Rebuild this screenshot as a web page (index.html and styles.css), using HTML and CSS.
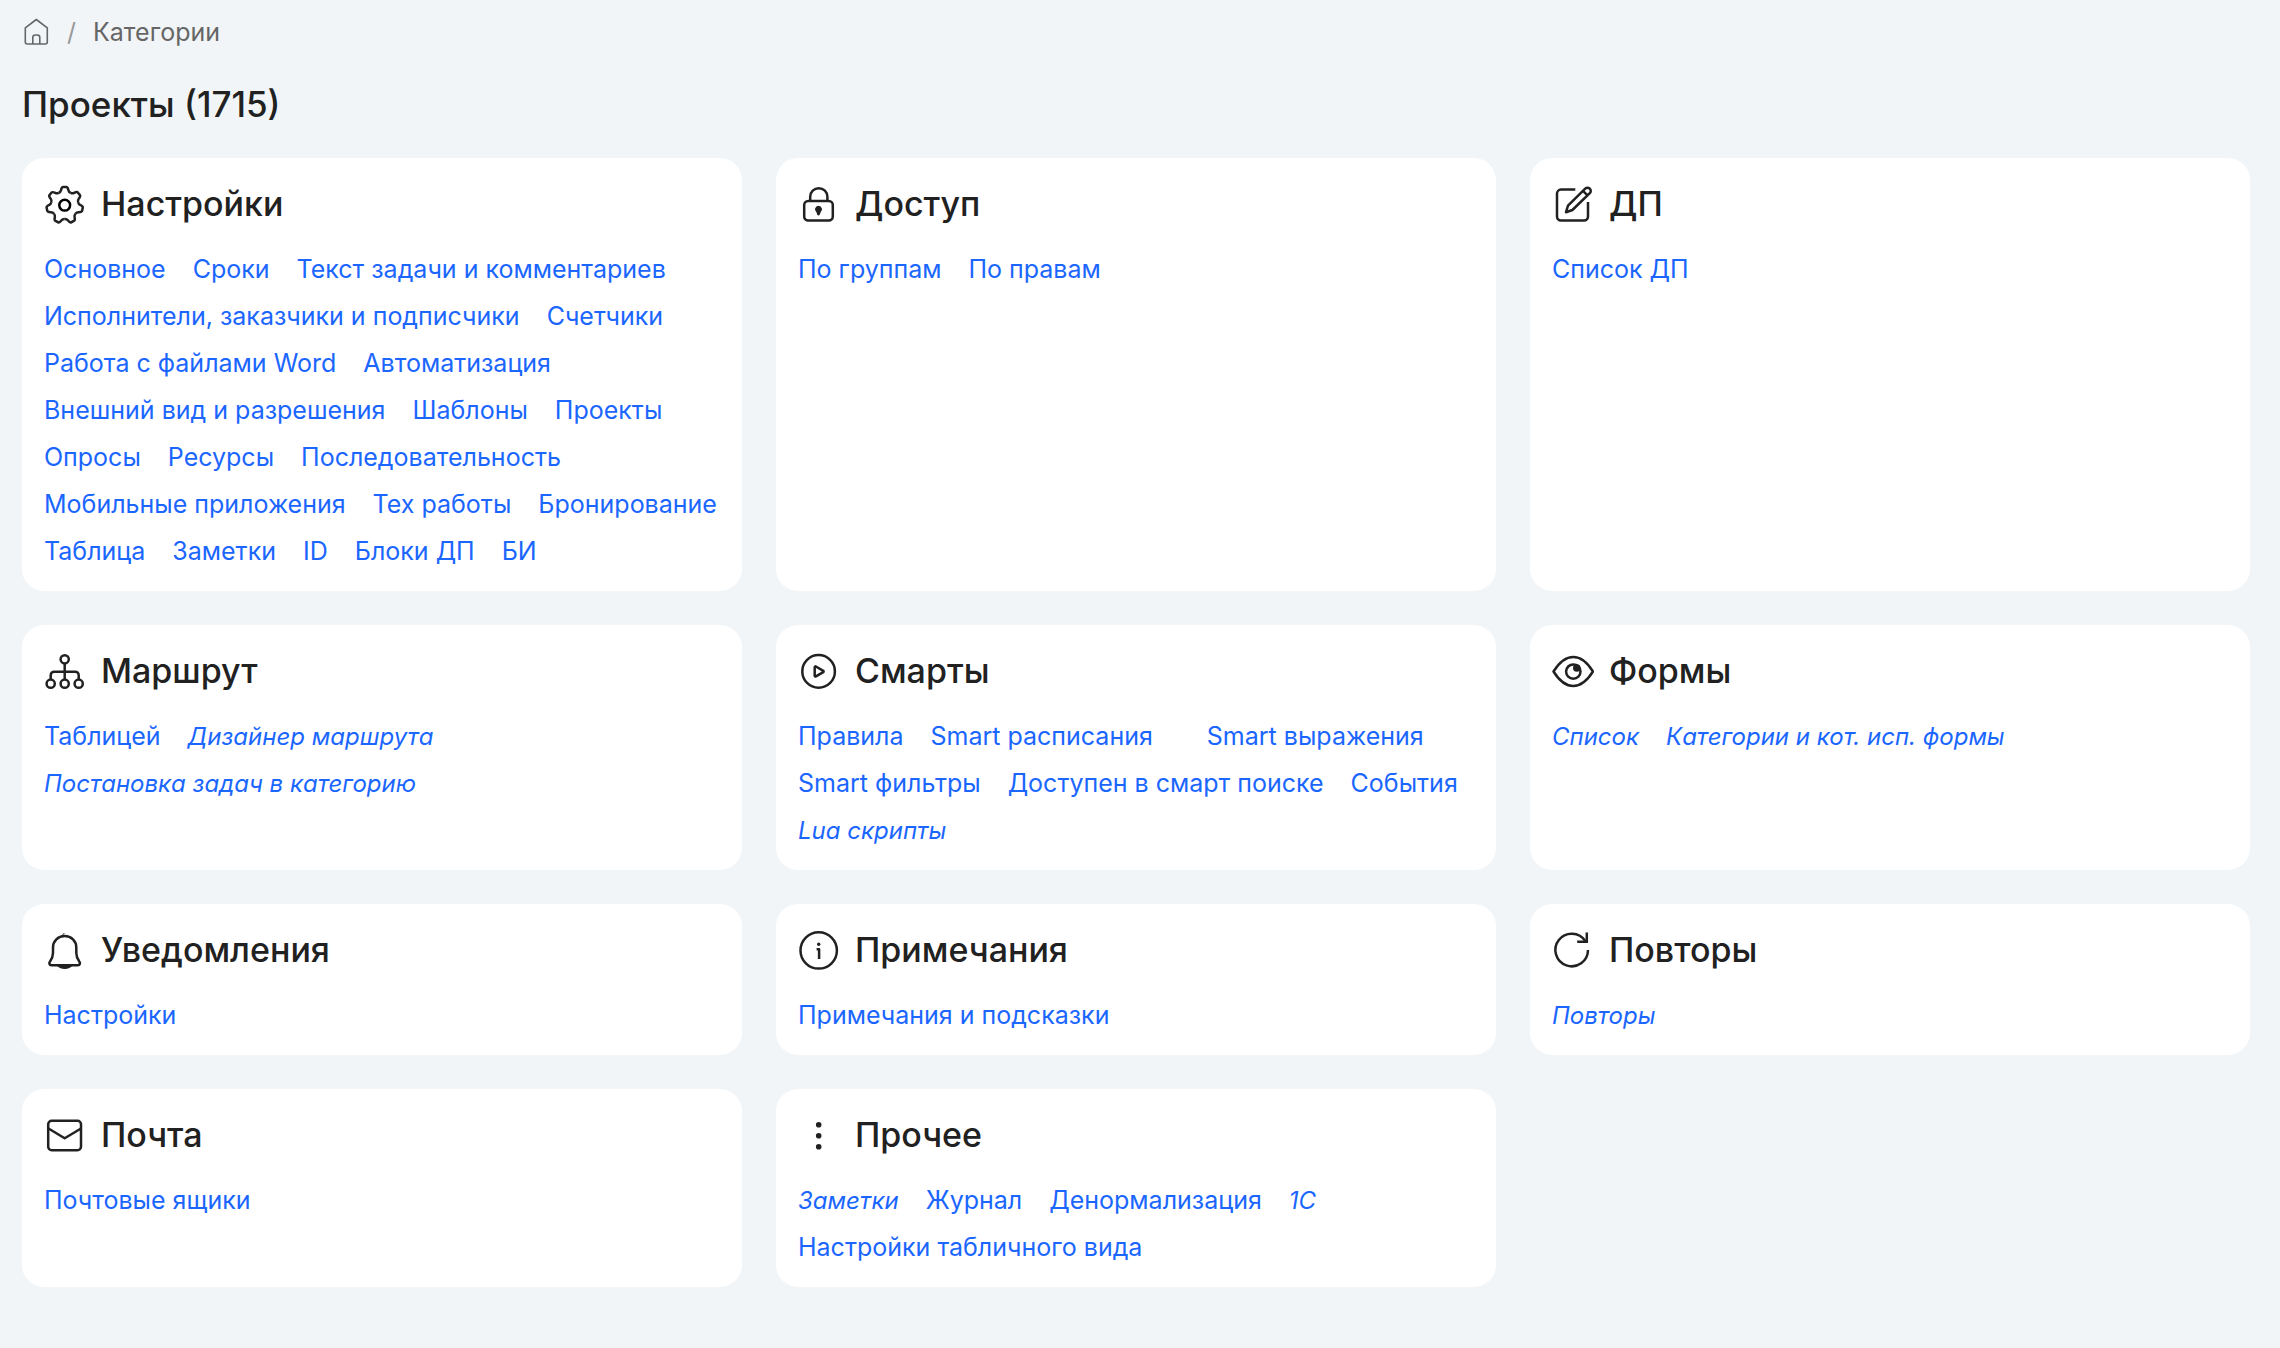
FILE: index.html
```html
<!DOCTYPE html>
<html lang="ru">
<head>
<meta charset="utf-8">
<meta name="viewport" content="width=device-width, initial-scale=1">
<title>Категории</title>
<link rel="stylesheet" href="styles.css">
</head>
<body>
<nav class="breadcrumb" aria-label="Навигация">
  <a class="home" href="#" aria-label="Главная"><svg viewBox="0 0 26 28" aria-hidden="true"><path d="M12.3 1.5 23.3 9.8V24a2 2 0 0 1-2 2h-18a2 2 0 0 1-2-2V9.8zM8.8 26v-6.500a2.500 2.500 0 0 1 2.500-2.500h2a2.500 2.500 0 0 1 2.500 2.500V26"/></svg></a>
  <span class="slash">/</span>
  <a class="crumb" href="#">Категории</a>
</nav>
<main>
  <h1 class="page-title">Проекты (1715)</h1>
  <div class="cards">
    <section class="card">
      <h2 class="card-title"><svg class="icon" viewBox="0 0 42 42" aria-hidden="true"><defs><path id="tooth" d="M-6-12.4C-4.6-13-4-13.6-3.7-15-3.3-17-2.9-18.2-1.5-18.2H1.5C2.9-18.2 3.3-17 3.7-15 4-13.6 4.6-13 6-12.4"/></defs><g transform="translate(20.7 22.2)"><use href="#tooth"/><use href="#tooth" transform="rotate(51.43)"/><use href="#tooth" transform="rotate(102.86)"/><use href="#tooth" transform="rotate(154.29)"/><use href="#tooth" transform="rotate(205.71)"/><use href="#tooth" transform="rotate(257.14)"/><use href="#tooth" transform="rotate(308.57)"/><circle class="ink" r="5.4"/></g></svg>Настройки</h2>
      <ul class="links">
        <li><a href="#">Основное</a></li>
        <li><a href="#">Сроки</a></li>
        <li><a href="#">Текст задачи и комментариев</a></li>
        <li><a href="#">Исполнители, заказчики и подписчики</a></li>
        <li><a href="#">Счетчики</a></li>
        <li><a href="#">Работа с файлами Word</a></li>
        <li><a href="#">Автоматизация</a></li>
        <li><a href="#">Внешний вид и разрешения</a></li>
        <li><a href="#">Шаблоны</a></li>
        <li><a href="#">Проекты</a></li>
        <li><a href="#">Опросы</a></li>
        <li><a href="#">Ресурсы</a></li>
        <li><a href="#">Последовательность</a></li>
        <li><a href="#">Мобильные приложения</a></li>
        <li><a href="#">Тех работы</a></li>
        <li><a href="#">Бронирование</a></li>
        <li><a href="#">Таблица</a></li>
        <li><a href="#">Заметки</a></li>
        <li><a href="#">ID</a></li>
        <li><a href="#">Блоки ДП</a></li>
        <li><a href="#">БИ</a></li>
      </ul>
    </section>
    <section class="card">
      <h2 class="card-title"><svg class="icon" viewBox="0 0 42 42" aria-hidden="true"><rect x="6.2" y="18" width="28.6" height="19.6" rx="4"/><path d="M12.2 18v-4.2a8.6 8.6 0 0 1 17.2 0V18"/><path class="fill" d="M20.5 22.7a3.6 3.6 0 0 1 2.2 6.4l-1 2.6a1.3 1.3 0 0 1-2.4 0l-1-2.6a3.6 3.6 0 0 1 2.2-6.4z"/></svg>Доступ</h2>
      <ul class="links">
        <li><a href="#">По группам</a></li>
        <li><a href="#">По правам</a></li>
      </ul>
    </section>
    <section class="card">
      <h2 class="card-title"><svg class="icon" viewBox="0 0 42 42" aria-hidden="true"><path d="M23.3 6.6H9a4 4 0 0 0-4 4v22.9a4 4 0 0 0 4 4h23a4 4 0 0 0 4-4V19"/><path d="M14 29.2l2-6.6L33.2 5.6a3.2 3.2 0 0 1 4.6 4.6L20.4 27zM31 7.8l4.5 4.5"/></svg>ДП</h2>
      <ul class="links">
        <li><a href="#">Список ДП</a></li>
      </ul>
    </section>
    <section class="card">
      <h2 class="card-title"><svg class="icon" viewBox="0 0 42 42" aria-hidden="true"><circle cx="20.7" cy="9.3" r="4.1"/><circle cx="6.7" cy="33.7" r="4.1"/><circle cx="20.7" cy="33.7" r="4.1"/><circle cx="34.7" cy="33.7" r="4.1"/><path d="M20.7 13.4v16.2M6.7 29.6v-4.4a3.5 3.5 0 0 1 3.5-3.5h21a3.5 3.5 0 0 1 3.5 3.5v4.4"/></svg>Маршрут</h2>
      <ul class="links">
        <li><a href="#">Таблицей</a></li>
        <li><a class="italic" href="#">Дизайнер маршрута</a></li>
        <li><a class="italic" href="#">Постановка задач в категорию</a></li>
      </ul>
    </section>
    <section class="card">
      <h2 class="card-title"><svg class="icon" viewBox="0 0 42 42" aria-hidden="true"><circle cx="20.6" cy="21.4" r="16.3"/><path d="M16.7 17.2a.8.8 0 0 1 1.2-.7l7.4 4.3a.8.8 0 0 1 0 1.3l-7.4 4.3a.8.8 0 0 1-1.2-.7z"/></svg>Смарты</h2>
      <ul class="links">
        <li><a href="#">Правила</a></li>
        <li><a href="#">Smart расписания</a></li>
        <li></li>
        <li><a href="#">Smart выражения</a></li>
        <li><a href="#">Smart фильтры</a></li>
        <li><a href="#">Доступен в смарт поиске</a></li>
        <li><a href="#">События</a></li>
        <li><a class="italic" href="#">Lua скрипты</a></li>
      </ul>
    </section>
    <section class="card">
      <h2 class="card-title"><svg class="icon" viewBox="0 0 42 42" aria-hidden="true"><path d="M1.5 21.5C7.5 12 14 7 21.3 7S35 12 41 21.5C35 31 28.5 36 21.3 36S7.5 31 1.5 21.5z"/><circle cx="21.3" cy="21.6" r="7.2"/><circle class="fill" cx="24.8" cy="18" r="3.8"/></svg>Формы</h2>
      <ul class="links">
        <li><a class="italic" href="#">Список</a></li>
        <li><a class="italic" href="#">Категории и кот. исп. формы</a></li>
      </ul>
    </section>
    <section class="card">
      <h2 class="card-title"><svg class="icon" viewBox="0 0 42 42" aria-hidden="true"><path d="M7.5 36.3C5.2 36.3 4.8 34 6 32.5 8.5 29 9 27 9 24v-5.5C9 12 14 7 20.7 7s11.6 5 11.6 11.5V24c0 3 .5 5 3 8.5 1.2 1.5.8 3.8-1.5 3.8z"/><path class="fill" d="M11.5 35.5h18.4C27 38.5 24 40 20.7 40s-6.3-1.500-9.200-4.500z"/><path class="thin" d="M18 6.5l2.4-2.5"/></svg>Уведомления</h2>
      <ul class="links">
        <li><a href="#">Настройки</a></li>
      </ul>
    </section>
    <section class="card">
      <h2 class="card-title"><svg class="icon" viewBox="0 0 42 42" aria-hidden="true"><circle cx="20.7" cy="21.4" r="18.2"/><circle class="fill" cx="20.7" cy="15.2" r="1.7"/><path d="M18.6 20.3h2.5V30"/></svg>Примечания</h2>
      <ul class="links">
        <li><a href="#">Примечания и подсказки</a></li>
      </ul>
    </section>
    <section class="card">
      <h2 class="card-title"><svg class="icon" viewBox="0 0 42 42" aria-hidden="true"><path d="M36 21a16.3 16.3 0 1 1-2.7-9"/><path class="square" d="M34.8 3.4v9.4h-9.6"/></svg>Повторы</h2>
      <ul class="links">
        <li><a class="italic" href="#">Повторы</a></li>
      </ul>
    </section>
    <section class="card">
      <h2 class="card-title"><svg class="icon" viewBox="0 0 42 42" aria-hidden="true"><rect x="4.2" y="6.8" width="32.8" height="29.4" rx="3.5"/><path d="M4.5 14.5l16.2 9.8L37 14.5"/></svg>Почта</h2>
      <ul class="links">
        <li><a href="#">Почтовые ящики</a></li>
      </ul>
    </section>
    <section class="card">
      <h2 class="card-title"><svg class="icon" viewBox="0 0 42 42" aria-hidden="true"><circle class="fill" cx="20.7" cy="10.7" r="2.8"/><circle class="fill" cx="20.7" cy="21.7" r="2.8"/><circle class="fill" cx="20.7" cy="32.7" r="2.8"/></svg>Прочее</h2>
      <ul class="links">
        <li><a class="italic" href="#">Заметки</a></li>
        <li><a href="#">Журнал</a></li>
        <li><a href="#">Денормализация</a></li>
        <li><a class="italic" href="#">1С</a></li>
        <li><a href="#">Настройки табличного вида</a></li>
      </ul>
    </section>
  </div>
</main>
</body>
</html>
```

FILE: styles.css
```css
* {
  box-sizing: border-box;
}

body {
  margin: 0;
  padding: 16px 30px 60px 22px;
  background: #f1f5f8;
  color: #212121;
  font-family: Inter, "Liberation Sans", sans-serif;
  font-size: 25px;
}

a {
  color: #1a66ff;
  text-decoration: none;
}

a:hover {
  text-decoration: underline;
}

.breadcrumb {
  display: flex;
  align-items: center;
  gap: 17px;
  height: 32px;
  color: #666;
}

.home {
  display: flex;
  padding-left: 2px;
}

.home svg {
  width: 26px;
  height: 28px;
  fill: none;
  stroke: #666;
  stroke-width: 1.6;
  stroke-linejoin: round;
}

.slash {
  color: #999;
}

.crumb {
  color: #666;
}

.page-title {
  margin: 34px 0 32px;
  font-size: 35px;
  font-weight: 500;
  line-height: 44px;
}

.cards {
  display: grid;
  grid-template-columns: repeat(3, minmax(0, 1fr));
  gap: 34px;
}

.card {
  padding: 25px 16px 16px 22px;
  border-radius: 22px;
  background: #fff;
}

.card-title {
  display: flex;
  align-items: center;
  gap: 15px;
  margin: 0 0 21px;
  font-size: 34px;
  font-weight: 500;
  line-height: 42px;
}

.icon {
  flex: none;
  width: 42px;
  height: 42px;
  fill: none;
  stroke: #212121;
  stroke-width: 2.5;
  stroke-linejoin: round;
}

.icon .ink {
  stroke: #000;
}

.icon .fill {
  fill: #212121;
  stroke: none;
}

.icon .thin {
  stroke-width: 1;
}

.icon .square {
  stroke-linejoin: miter;
}

.links {
  display: flex;
  flex-wrap: wrap;
  column-gap: 27px;
  margin: 0;
  padding: 0;
  list-style: none;
  line-height: 47px;
}

.links li {
  height: 47px;
}

.italic {
  font-size: 24px;
  font-style: italic;
}
```
